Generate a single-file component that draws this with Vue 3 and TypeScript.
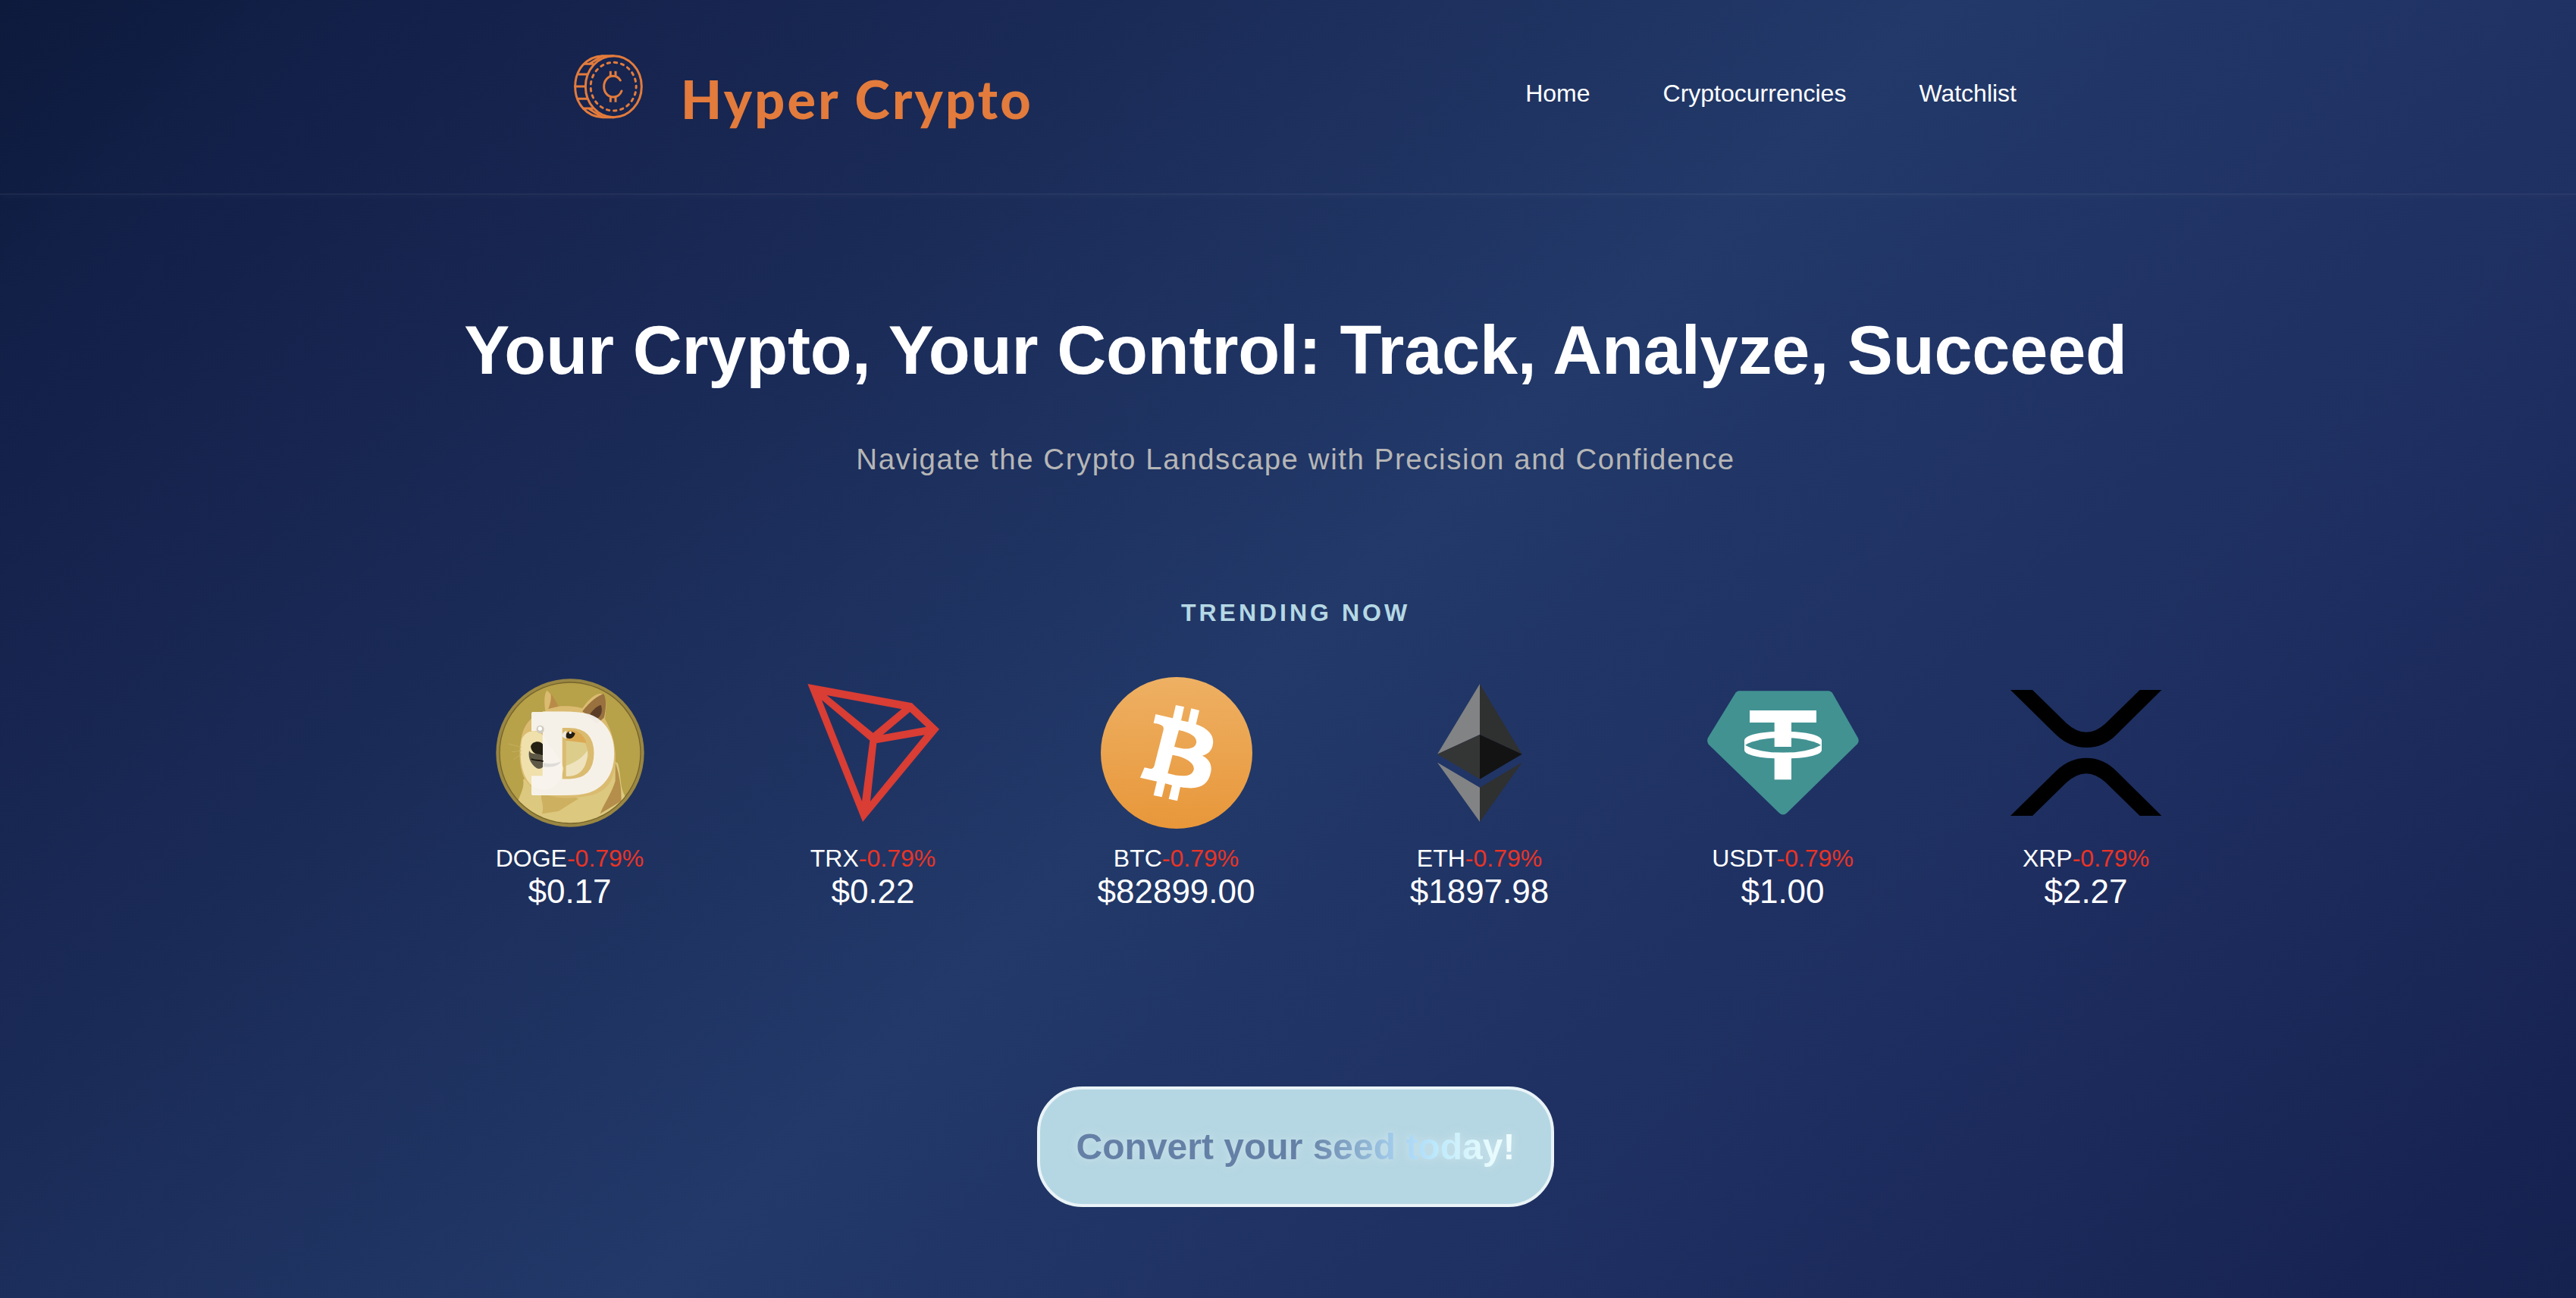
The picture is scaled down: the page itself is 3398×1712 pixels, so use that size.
<script setup lang="ts">
interface Coin {
  symbol: string
  change: string
  price: string
}

const links: string[] = ['Home', 'Cryptocurrencies', 'Watchlist']

const coins: Coin[] = [
  { symbol: 'DOGE', change: '-0.79%', price: '$0.17' },
  { symbol: 'TRX', change: '-0.79%', price: '$0.22' },
  { symbol: 'BTC', change: '-0.79%', price: '$82899.00' },
  { symbol: 'ETH', change: '-0.79%', price: '$1897.98' },
  { symbol: 'USDT', change: '-0.79%', price: '$1.00' },
  { symbol: 'XRP', change: '-0.79%', price: '$2.27' },
]
</script>

<template>
  <div class="page">
    <header class="header">
      <div class="brand">
        <svg class="brand-icon" viewBox="45 30 285 265" fill="none" stroke="#e37b3c" stroke-width="9" stroke-linecap="round">
          <ellipse cx="208" cy="162.500" rx="111" ry="121.500" />
          <path d="M208 41H165C101 43 56 96 56 162.500S101 282 165 284H208" />
          <path d="M93 73H125M70 114H105M56 162H97M66 211H105M88 249H125M112 73L162 42M112 251L162 283" />
          <ellipse cx="207.500" cy="162.500" rx="90" ry="95.500" stroke-dasharray="10.500 17.300" stroke-dashoffset="5" />
          <path d="M235 138C228 127 218 121 206 121C186 121 170 139 170 162.500S186 204 206 204C222 204 235 194 240 180" />
          <path d="M196 101V121M216 101V121M196 205V224M216 205V224" stroke-linecap="butt" />
        </svg>
        <span class="brand-name">Hyper Crypto</span>
      </div>
      <nav class="nav">
        <a v-for="link in links" :key="link">{{ link }}</a>
      </nav>
    </header>

    <main class="main">
      <h1 class="title">Your Crypto, Your Control: Track, Analyze, Succeed</h1>
      <p class="subtitle">Navigate the Crypto Landscape with Precision and Confidence</p>
      <h2 class="trending">TRENDING NOW</h2>

      <section class="coins">
        <article v-for="coin in coins" :key="coin.symbol" class="coin">
          <svg v-if="coin.symbol === 'DOGE'" class="coin-icon" viewBox="36 39 600 600">
            <defs>
              <clipPath id="doge-clip"><circle cx="336" cy="339" r="277" /></clipPath>
            </defs>
            <circle cx="336" cy="339" r="293" fill="#9a8742" />
            <circle cx="336" cy="339" r="281" fill="#75632c" />
            <circle cx="336" cy="339" r="277" fill="#b7a149" />
            <g clip-path="url(#doge-clip)">
              <path d="M150 445C156 475 140 500 130 530L200 640H480L560 520C530 480 540 430 525 380L440 330Z" fill="#dcc87e" />
              <path d="M515 375C535 440 540 490 538 530L455 580C470 540 500 500 515 450Z" fill="#b48e4a" />
              <path d="M222 505L300 500L370 520L290 570L225 580C235 550 220 530 222 505Z" fill="#cdb160" />
              <path d="M238 175C232 140 234 105 244 92C262 105 275 130 290 155C320 152 360 155 385 162C400 140 430 105 455 104C475 105 480 130 478 165L474 205C500 250 520 310 515 380C510 450 480 500 400 510C300 530 200 510 155 440C135 400 130 330 145 270C155 230 180 190 238 175Z" fill="#dabb70" />
              <path d="M260 105C275 125 285 145 290 155L250 165C258 145 262 125 260 105Z" fill="#b98b48" />
              <path d="M385 175C400 155 430 120 468 105C482 125 478 170 470 200L440 225Z" fill="#98713f" />
              <path d="M415 185C430 165 448 150 458 150C466 170 460 190 448 200L430 205Z" fill="#5b3d27" />
              <path d="M145 285C160 245 215 240 235 280C255 320 300 360 310 400C300 470 250 500 195 475C150 450 130 370 145 285Z" fill="#f0e0ab" />
              <path d="M320 250C365 245 405 290 408 350C400 390 360 410 320 425Z" fill="#dccd8b" />
              <path d="M318 255C350 238 390 260 400 300L320 290Z" fill="#dca953" />
              <path d="M320 390C365 375 390 350 405 330C405 390 385 432 320 432Z" fill="#eee3bd" />
              <path d="M90 303L145 317M105 335L145 330M112 365L145 343" stroke="#cbb765" stroke-width="2" />
            </g>
            <g class="doge-letter">
              <text transform="translate(190 507) scale(.91 1)">D</text>
              <path d="M187 177H232V253H183V181ZM183 430H232V507H187L183 503Z" />
            </g>
            <ellipse cx="218" cy="246" rx="15" ry="16" fill="#cfcabd" />
            <ellipse cx="217" cy="243" rx="8" ry="8" fill="#fff" />
            <path d="M303 270C306 260 314 253 322 251V283C313 282 306 277 303 270Z" fill="#efe9df" />
            <path d="M320 270C320 256 338 249 356 262C352 280 334 290 320 277Z" fill="#211b12" />
            <circle cx="337" cy="259" r="5" fill="#fff" />
            <path d="M180 315C185 290 220 290 228 305V350C210 345 185 345 180 315Z" fill="#242014" />
            <path d="M174 330C185 352 215 335 228 352V395C218 404 208 403 200 397C185 385 168 365 174 330Z" fill="#5d5745" />
            <path d="M182 363C200 372 215 365 230 373" fill="none" stroke="#15120b" stroke-width="5" />
            <path d="M230 378C255 385 280 382 300 373C292 392 262 398 230 394Z" fill="#dedcd9" />
          </svg>

          <svg v-else-if="coin.symbol === 'TRX'" class="coin-icon" viewBox="36 39 600 600">
            <path fill="#d93d34" fill-rule="evenodd" d="M76 66L489 142L597 245L294 612ZM152 111L335 260L448 166ZM132 130L291 530L322 290ZM481 177L374 267L545 236ZM539 268L349 301L324 531Z" />
          </svg>

          <svg v-else-if="coin.symbol === 'BTC'" class="coin-icon" viewBox="66 339 600 600">
            <defs>
              <linearGradient id="btc-fill" x1="0" y1="0" x2="0" y2="1">
                <stop offset="0" stop-color="#eeb063" />
                <stop offset="1" stop-color="#e8973a" />
              </linearGradient>
            </defs>
            <circle cx="366" cy="639" r="300" fill="url(#btc-fill)" />
            <path fill="#fff" fill-rule="evenodd" d="M283 486L351 502L363 450L396 457L384 511L412 517L424 463L456 471L443 526C492 543 515 570 510 603C507 628 493 644 468 650C497 665 508 688 501 718C490 768 455 788 381 774L369 829L335 821L348 767L321 760L308 814L275 807L288 752L222 737L239 697C262 702 273 707 278 690L314 548C317 532 308 527 275 521ZM375 549L357 614C398 627 438 627 444 600C450 573 412 556 375 549ZM350 647L331 720C378 733 425 738 434 706C440 675 390 653 350 647Z" />
          </svg>

          <svg v-else-if="coin.symbol === 'ETH'" class="coin-icon" viewBox="36 39 600 600">
            <path fill="#828384" d="M336 66L168 344L336 267ZM168 377L336 476V612Z" />
            <path fill="#2f3030" d="M336 66L503 344L336 267ZM503 377L336 476V612Z" />
            <path fill="#343535" d="M168 344L336 267V443Z" />
            <path fill="#131313" d="M503 344L336 267V443Z" />
          </svg>

          <svg v-else-if="coin.symbol === 'USDT'" class="coin-icon" viewBox="66 39 600 600">
            <path fill="#429292" d="M192 94H545Q556 94 563 105L662 279Q669 293 660 304L382 576Q366 591 350 576L71 305Q63 293 69 279L176 105Q183 94 192 94Z" />
            <path fill="#fff" d="M213 290C213 270 270 254 366 254S519 270 519 290V328C519 347 460 362 366 362S213 347 213 328Z" />
            <path fill="#429292" d="M216 308C250 288 310 279 366 279S482 288 516 308C480 328 430 338 366 338S250 328 216 308Z" />
            <path fill="#fff" d="M234 171H498V219H399V315H332V219H234ZM332 338H399V445H332Z" />
          </svg>

          <svg v-else class="coin-icon" viewBox="66 39 600 600">
            <path d="M66 90H153L288 222Q366 293 443 222L578 90H664L486 266Q435 318 366 318Q300 318 247 268ZM66 588H153L288 456Q366 385 443 456L578 588H664L486 412Q435 359 366 359Q300 359 247 410Z" />
          </svg>

          <p class="coin-label">{{ coin.symbol }}<span class="coin-change">{{ coin.change }}</span></p>
          <p class="coin-price">{{ coin.price }}</p>
        </article>
      </section>

      <button class="cta"><span class="cta-text">Convert your seed today!</span></button>
    </main>
  </div>
</template>

<style>
body {
  margin: 0;
}
</style>

<style scoped>
.page {
  box-sizing: border-box;
  width: 3398px;
  height: 1712px;
  overflow: hidden;
  color: #fff;
  font-family: "Liberation Sans", Helvetica, Arial, sans-serif;
  background: linear-gradient(135deg, #0d1a3c 0%, #132049 10%, #192854 25%, #223969 50%, #1e2e60 75%, #15214f 100%);
}

.header {
  box-sizing: border-box;
  display: flex;
  justify-content: space-between;
  align-items: flex-start;
  height: 257px;
  padding: 70px 738px 0 755px;
  border-bottom: 2px solid rgba(255, 255, 255, 0.05);
  box-shadow: 0 4px 10px rgba(255, 255, 255, 0.025);
}

.brand {
  display: flex;
  align-items: flex-start;
  gap: 48px;
}

.brand-icon {
  width: 95px;
  height: 88.33px;
}

.brand-name {
  margin-top: 18px;
  color: #e37b3c;
  font-family: Lato, "Open Sans", sans-serif;
  font-size: 70px;
  font-weight: 900;
  line-height: 84px;
  letter-spacing: 3.3px;
  white-space: nowrap;
}

.nav {
  display: flex;
  gap: 96px;
  margin-top: 33px;
  font-size: 32px;
  line-height: 40px;
}

.main {
  display: flex;
  flex-direction: column;
  align-items: center;
  padding: 155px 0 0 20px;
}

.title {
  margin: 0;
  font-size: 90px;
  line-height: 100px;
  letter-spacing: -0.17px;
  white-space: nowrap;
}

.subtitle {
  margin: 70px 0 0;
  color: #b6b6b6;
  font-size: 38.4px;
  line-height: 48px;
  letter-spacing: 1.6px;
}

.trending {
  margin: 158px 0 0;
  color: #b5d8e4;
  font-size: 32px;
  line-height: 40px;
  letter-spacing: 4px;
}

.coins {
  display: flex;
  width: 2400px;
  margin: 65px 0 0 85px;
}

.coin {
  display: flex;
  flex: 1;
  flex-direction: column;
  align-items: center;
}

.coin-icon {
  width: 200px;
  height: 200px;
}

.doge-letter {
  fill: #f9f6f2;
  opacity: 0.93;
  font-family: "DejaVu Sans", sans-serif;
  font-size: 453px;
  font-weight: 700;
}

.coin-label {
  margin: 19px 0 0;
  font-size: 32px;
  line-height: 40px;
}

.coin-change {
  color: #ea3425;
}

.coin-price {
  margin: 0;
  font-size: 44px;
  line-height: 48px;
}

.cta {
  box-sizing: border-box;
  height: 159px;
  margin: 233px 0 0;
  padding: 0 48px;
  border: 4px solid #e9f3f7;
  border-radius: 60px;
  background: #b5d7e3;
  font-family: "Liberation Sans", Arial, sans-serif;
  font-size: 48px;
  font-weight: 700;
  line-height: 151px;
  white-space: nowrap;
}

.cta-text {
  display: block;
  color: transparent;
  background: linear-gradient(90deg, #6580a6 0%, #6580a6 52%, #8fb4d3 66%, #aad5f5 75%, #bce9fc 82%, #e0f9fd 92%, #f2fdff 100%);
  -webkit-background-clip: text;
  background-clip: text;
  filter: drop-shadow(0 0 6px rgba(230, 240, 245, 0.5));
}
</style>
